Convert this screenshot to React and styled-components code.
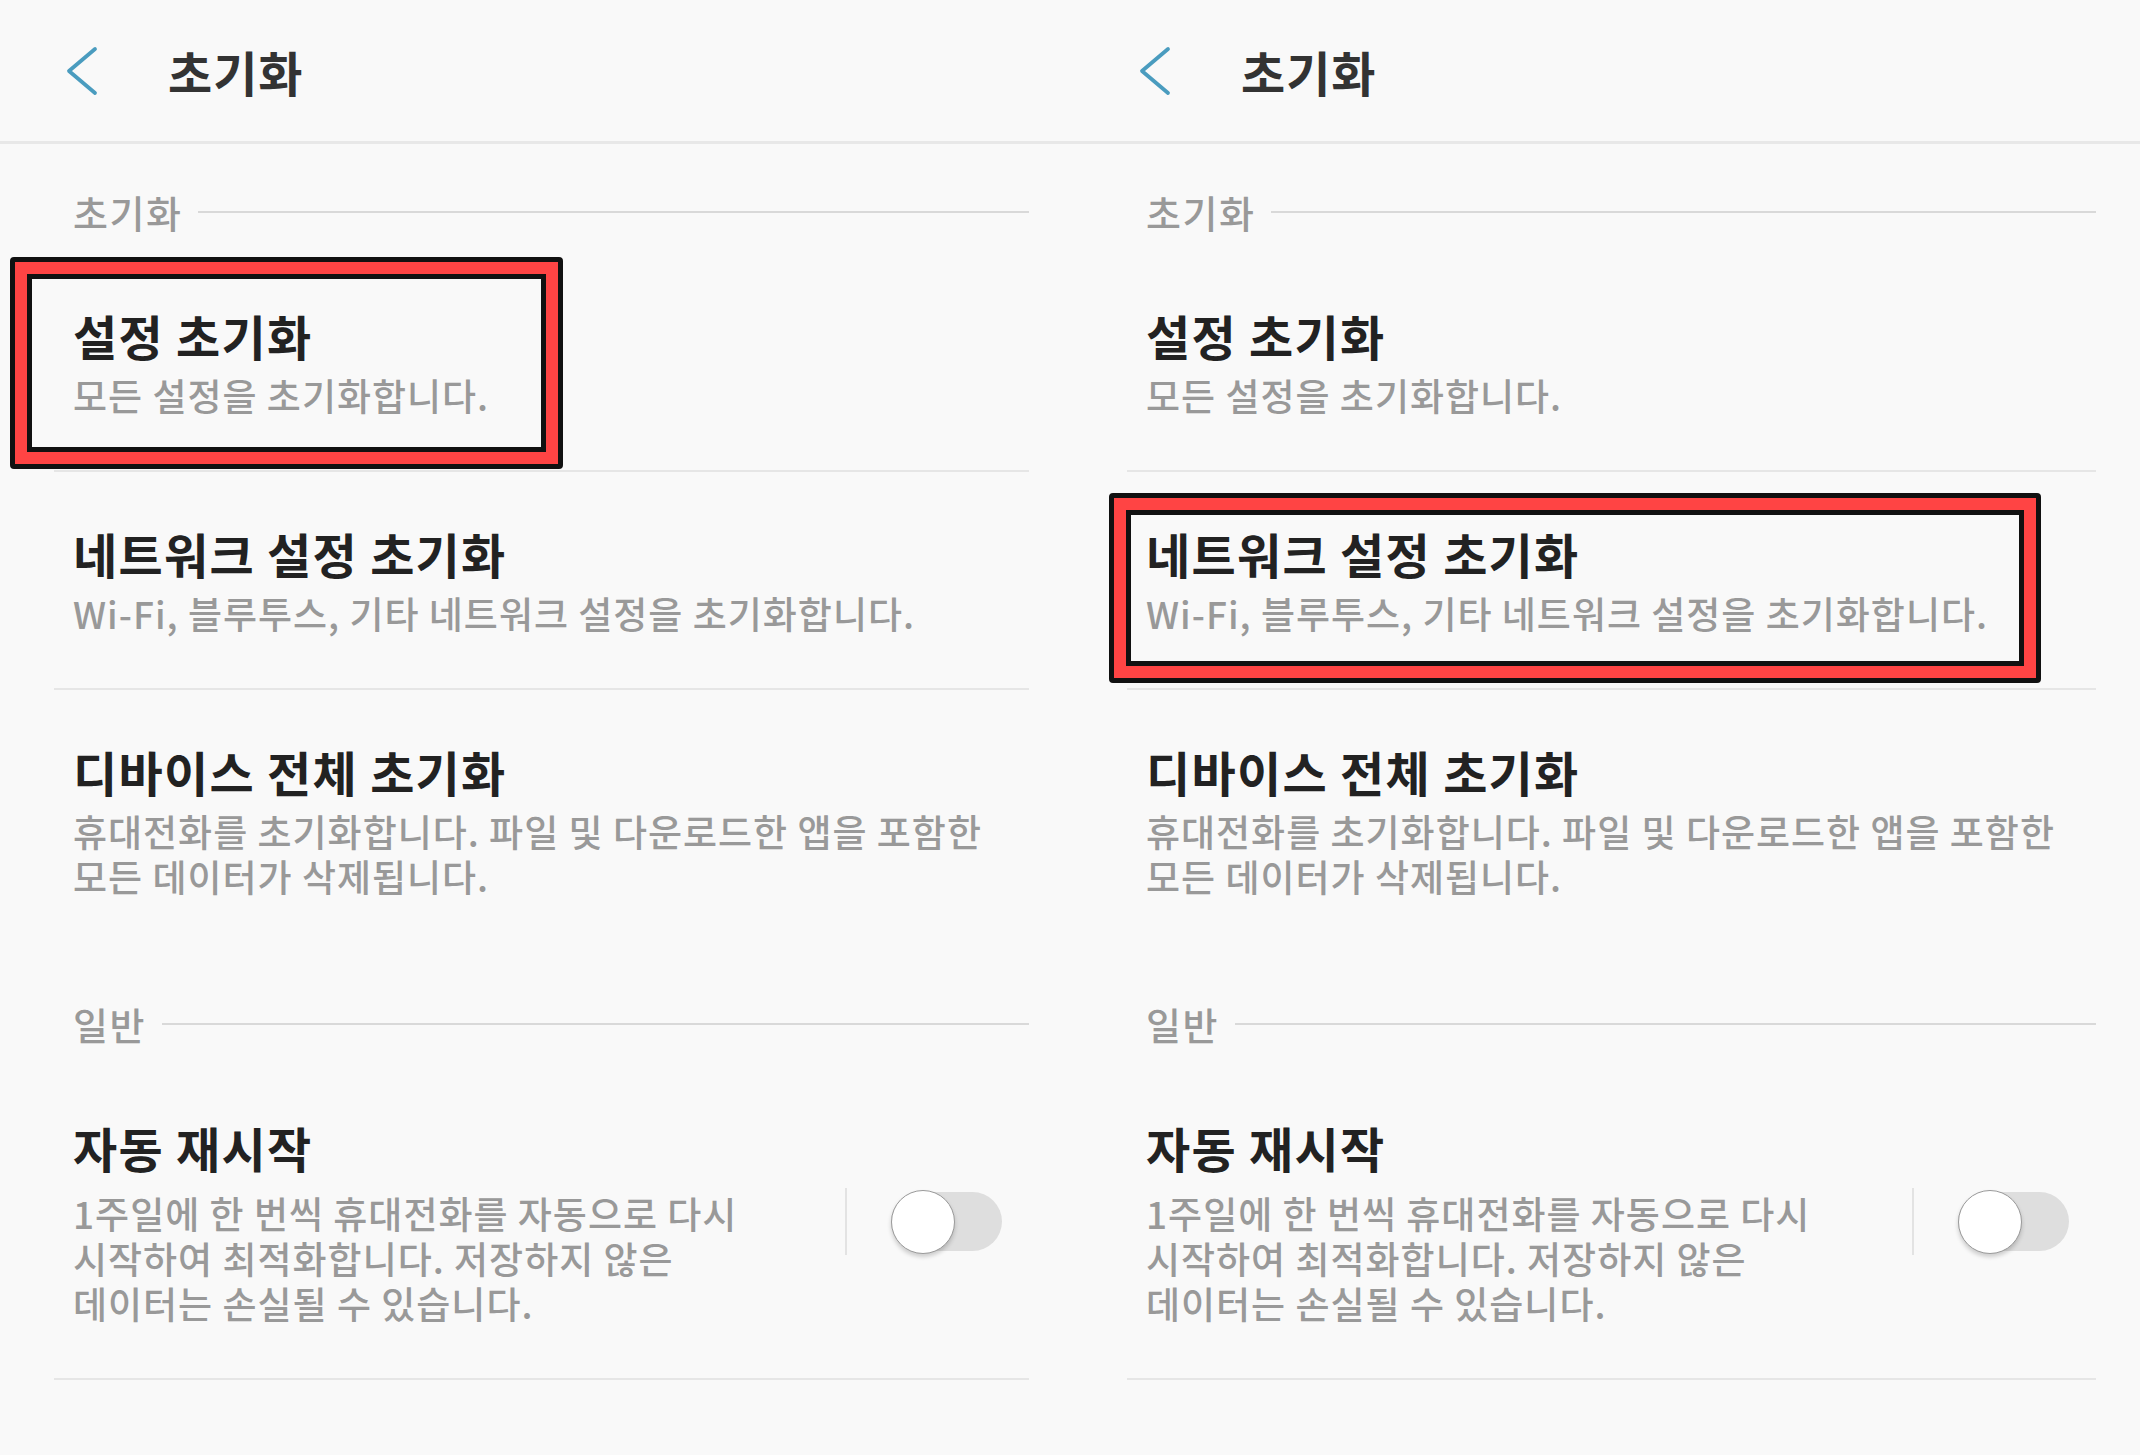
import styled, { createGlobalStyle } from "styled-components"

const GlobalStyle = createGlobalStyle`
  html, body {
    margin: 0;
    padding: 0;
    background: #f9f9f9;
  }
  body {
    font-family: "Noto Sans CJK KR", "Noto Sans", sans-serif;
  }
`

const Screen = styled.div`
  display: grid;
  grid-template-columns: 1073px 1067px;
  width: 2140px;
  height: 1455px;
  background: #f9f9f9;
  overflow: hidden;
`

const Panel = styled.div`
  position: relative;
  display: flex;
  flex-direction: column;
`

const Header = styled.div`
  display: flex;
  align-items: center;
  height: 141px;
  padding-left: ${props => props.inset}px;
  border-bottom: 3px solid #e8e8e8;
`

const BackIcon = styled.svg`
  width: 34px;
  height: 50px;
  flex-shrink: 0;
`

const HeaderTitle = styled.div`
  margin-left: 69px;
  font-size: 48px;
  line-height: 60px;
  font-weight: 700;
  letter-spacing: 1px;
  color: #333;
`

const Section = styled.div`
  display: flex;
  align-items: center;
  padding: ${props => props.top}px 44px 19px ${props => props.inset + 8}px;
`

const SectionLabel = styled.div`
  font-size: 38px;
  line-height: 46px;
  font-weight: 500;
  letter-spacing: 1.5px;
  color: #999;
`

const SectionLine = styled.div`
  flex: 1;
  height: 2px;
  margin-left: 16px;
  background: #d9d9d9;
`

const Item = styled.div`
  display: flex;
  align-items: center;
  margin: 0 44px 0 ${props => props.inset - 11}px;
  padding: 51px ${props => props.toggle ? "27px" : "0"} 52px 19px;
  border-bottom: ${props => props.last ? "none" : "2px solid #e6e6e6"};
`

const ItemText = styled.div`
  flex: 1;
`

const ItemTitle = styled.div`
  font-size: 48px;
  line-height: 60px;
  font-weight: 700;
  letter-spacing: 1.3px;
  color: #222;
  margin-bottom: ${props => props.gap || 8}px;
`

const ItemSub = styled.div`
  font-size: 37px;
  line-height: 45px;
  font-weight: 500;
  letter-spacing: 1px;
  color: #999;
  white-space: nowrap;
`

const VDivider = styled.div`
  width: 2px;
  height: 67px;
  background: #e3e3e3;
  margin-right: 44px;
`

const Track = styled.div`
  display: flex;
  align-items: center;
  width: 111px;
  height: 59px;
  border-radius: 30px;
  background: #dedede;
`

const Thumb = styled.div`
  width: 62px;
  height: 62px;
  border-radius: 50%;
  background: #fff;
  border: 1.5px solid #9a9a9a;
  box-shadow: 0 3px 4px rgba(0, 0, 0, 0.18);
`

const Highlight = styled.div`
  position: absolute;
  box-sizing: border-box;
  border: 5px solid #111;
  border-radius: 4px;
  box-shadow: inset 0 0 0 12px #ff4444, inset 0 0 0 17px #111;
`

function Back() {
  return (
    <BackIcon viewBox="0 0 34 50">
      <path d="M30 3 L4 25 L30 47" fill="none" stroke="#4a9cbf" strokeWidth="3.8" strokeLinecap="round" strokeLinejoin="round" />
    </BackIcon>
  )
}

function ResetPanel({ box, inset }) {
  return (
    <Panel>
      <Header inset={inset}>
        <Back />
        <HeaderTitle>초기화</HeaderTitle>
      </Header>

      <Section top={45} inset={inset}>
        <SectionLabel>초기화</SectionLabel>
        <SectionLine />
      </Section>

      <Item inset={inset}>
        <ItemText>
          <ItemTitle>설정 초기화</ItemTitle>
          <ItemSub>모든 설정을 초기화합니다.</ItemSub>
        </ItemText>
      </Item>

      <Item inset={inset}>
        <ItemText>
          <ItemTitle>네트워크 설정 초기화</ItemTitle>
          <ItemSub>Wi-Fi, 블루투스, 기타 네트워크 설정을 초기화합니다.</ItemSub>
        </ItemText>
      </Item>

      <Item last inset={inset}>
        <ItemText>
          <ItemTitle>디바이스 전체 초기화</ItemTitle>
          <ItemSub>
            휴대전화를 초기화합니다. 파일 및 다운로드한 앱을 포함한<br />
            모든 데이터가 삭제됩니다.
          </ItemSub>
        </ItemText>
      </Item>

      <Section top={50} inset={inset}>
        <SectionLabel>일반</SectionLabel>
        <SectionLine />
      </Section>

      <Item toggle inset={inset}>
        <ItemText>
          <ItemTitle gap={14}>자동 재시작</ItemTitle>
          <ItemSub>
            1주일에 한 번씩 휴대전화를 자동으로 다시<br />
            시작하여 최적화합니다. 저장하지 않은<br />
            데이터는 손실될 수 있습니다.
          </ItemSub>
        </ItemText>
        <VDivider />
        <Track>
          <Thumb />
        </Track>
      </Item>

      <Highlight style={box} />
    </Panel>
  )
}

function App() {
  return (
    <Screen>
      <GlobalStyle />
      <ResetPanel inset={65} box={{ left: 10, top: 257, width: 553, height: 212 }} />
      <ResetPanel inset={65} box={{ left: 36, top: 493, width: 932, height: 190 }} />
    </Screen>
  )
}

export default App
